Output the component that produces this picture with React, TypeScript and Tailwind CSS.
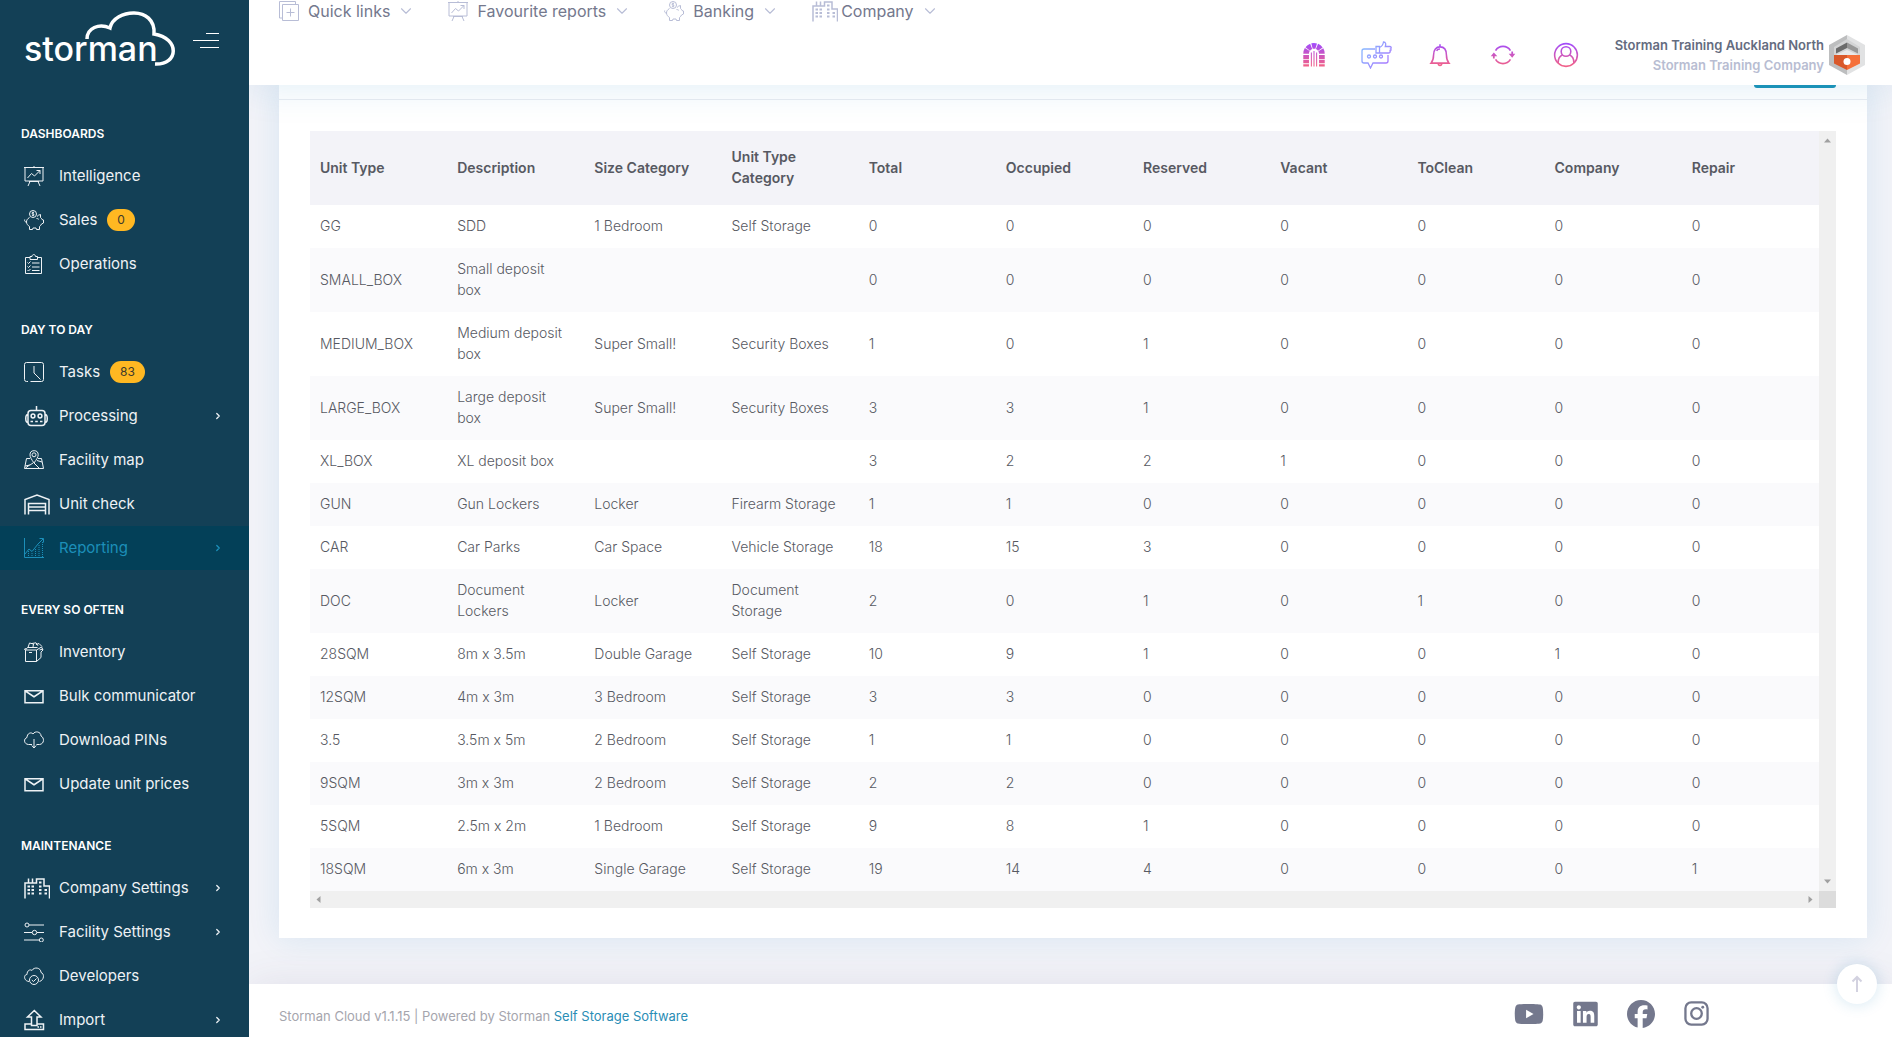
import React from 'react';
import { LiaEnvelope } from 'react-icons/lia';
import { FaYoutube, FaLinkedin, FaFacebook } from 'react-icons/fa6';
import { ChevronDown, ChevronRight } from 'lucide-react';

type IconProps = { className?: string };

// Thin 20x20 line icon shell
function Line({ className = '', children }: { className?: string; children: React.ReactNode }) {
    return (
        <svg viewBox="0 0 20 20" fill="none" stroke="currentColor" strokeWidth="1" className={`w-5 h-5 flex-shrink-0 ${className}`} aria-hidden="true">
            {children}
        </svg>
    );
}

const BoardIcon = ({ className }: IconProps) => (
    <Line className={className}>
        <path d="M0 1.5h20M10 0v1.5M1 1.5v13.5h18V1.5M6 15.5l-2 4.5M14 15.5l2 4.5M5 15.5h10" />
        <path d="M3.5 12l4-4.5 3 2.5L16 4.5M12.5 4.5H16V8" />
    </Line>
);

const PiggyIcon = ({ className }: IconProps) => (
    <Line className={className}>
        <circle cx="9" cy="4" r="3.5" />
        <path d="M10 2.7c-1-.7-2.2-.2-2 .6.2.9 2 .5 2 1.5 0 .9-1.3 1-2.1.4M9 1.8v4.4" />
        <path d="M5.500 7.500C3 9 2.500 10.500 2.500 12c0 2 1.500 3.500 3 4.500V19.500h3l.5-1.500h3l.5 1.500h3v-3c1-.7 1.700-1.600 2-2.500l2-1v-3L18 9.500c-.3-1-.8-1.500-1.500-2V4.500c-1.500.2-2.700 1-3.500 2M2.500 12C1 12 .3 11 .7 9.500M12.500 8.500c.8 0 1.700.3 2.300.8" />
    </Line>
);

const ClipboardIcon = ({ className }: IconProps) => (
    <Line className={className}>
        <path d="M6 3.500H1.500v16h16v-16H13M6 5.500v-3h2c0-2.600 3.500-2.600 3.500 0H13.500v3z" />
        <path d="M3.500 8.500l1 1 2-2M3.500 12.500l1 1 2-2M3.500 16l1 1 2-2M8 9h7.500M8 13h7.500M8 16.500h7.500" />
    </Line>
);

const ClockIcon = ({ className }: IconProps) => (
    <Line className={className}>
        <path d="M4 19.500H2.500a2 2 0 0 1-2-2v-15a2 2 0 0 1 2-2h15a2 2 0 0 1 2 2v15a2 2 0 0 1-2 2H6.500M10 4v7l6.500 6.500" />
    </Line>
);

const MapIcon = ({ className }: IconProps) => (
    <Line className={className}>
        <path d="M10 13C7.500 9.500 6 7 6 4.800a4 4 0 0 1 8.200 0C14.200 7 12.500 9.500 10 13z" />
        <circle cx="10" cy="4.800" r="2" />
        <path d="M6 8.500H2.500L.5 18.500h19l-2-10h-3.500M1 16l5-1 3-2M10 13l5 5M13 10.500l5 1.500M1.500 18l4-3" />
    </Line>
);

const GrowthIcon = ({ className }: IconProps) => (
    <Line className={className}>
        <path d="M.5 0v19.500H20M1 16l4-5 3 2.500L14 6l5-5M15.500.5h4v4" />
        <path d="M4.500 13v6M8 15v4M11.500 11v8M15 7v12M18.500 4v15" strokeDasharray="1 1" />
    </Line>
);

const BoxIcon = ({ className }: IconProps) => (
    <Line className={className}>
        <path d="M1.500 8h11v11.500h-11zM12.500 8l5-3 1.500 3-2 2v5.500l-4.500 4M1.500 8l2-2.500h10M5 10.500h3M.5 8l1-2" />
        <path d="M4 5.500L5.500 1l4 1-.5 3M8 1.500l4-.7 2 3M12 2.500l3-1 3 3M15.500 8l3.500-1" />
    </Line>
);

const CloudDownIcon = ({ className }: IconProps) => (
    <Line className={className}>
        <path d="M8 14.500H4.500C-.5 14-.5 8.500 3 7.500 3 3.500 7 1.500 9 4c2-3.500 8-2.500 8 2 3.500 1.500 3.500 8-1.500 8.500H12.500M10 9v9M7.800 15.500L10 18l2.200-2.500" />
    </Line>
);

const CloudCheckIcon = ({ className }: IconProps) => (
    <Line className={className}>
        <path d="M5 15.500C-.5 15-.5 8.500 3 8.500 3 4.500 6 3 8 4.500c2-4 9-3 9 2 3.500 1 3.500 7.500-1.500 9" />
        <circle cx="10" cy="14" r="4.500" />
        <path d="M7.800 14l1.700 1.500 3-3" />
    </Line>
);

const SlidersIcon = ({ className }: IconProps) => (
    <Line className={className}>
        <path d="M5 3h15M0 10.500h8M13 10.500h7M0 18h15" />
        <circle cx="3" cy="3" r="2" />
        <circle cx="10.500" cy="10.500" r="2.200" />
        <circle cx="17.300" cy="18" r="2" />
    </Line>
);

const PagesIcon = ({ className }: IconProps) => (
    <Line className={className}>
        <path d="M3.500 3.500h16v16h-16zM3.500 17H.5V.5h16v3M11.500 7.500v8M7.500 11.500h8" />
    </Line>
);

// Heavier 26x22 icons
function Wide({ children }: { children: React.ReactNode }) {
    return (
        <svg viewBox="0 0 26 22" fill="none" stroke="currentColor" strokeWidth="1.500" className="w-[26px] h-[22px] flex-shrink-0" aria-hidden="true">
            {children}
        </svg>
    );
}

const RobotIcon = () => (
    <Wide>
        <path d="M12.500 1v4M7 5.500h11a3 3 0 0 1 3 3v9a3 3 0 0 1-3 3H7a3 3 0 0 1-3-3v-9a3 3 0 0 1 3-3zM4 9.500c-3 0-3 8 0 8M21 9.500c3 0 3 8 0 8" />
        <circle cx="9" cy="11" r="1.900" />
        <circle cx="16" cy="11" r="1.900" />
        <path d="M6.500 16.500H9M11.200 16.500h2.600M16 16.500h2.500" />
    </Wide>
);

const WarehouseIcon = () => (
    <Wide>
        <path d="M1 21.500V6.500L13 2l12 4.500v15M4.500 21.500v-11h17v11M4.500 14h17M4.500 17.500h17" />
    </Wide>
);

const CityIcon = () => (
    <Wide>
        <path d="M1 21.500V6h11.500V2h7.500v7h5.500v12.500M4.500 6V1.500M8.500 6V1.500M12.500 6V1.500" />
        <path d="M3.500 9.500h2.500M7.500 9.500H10M3.500 13h2.500M7.500 13H10M3.500 16.500h2.500M7.500 16.500H10M15 5.500h2.500M15 9.500h2.500M15 13h2.500M15 16.500h2.500M20.500 13h2.500M20.500 16.500h2.500" strokeWidth="2.200" />
    </Wide>
);

const UploadIcon = () => (
    <Wide>
        <path d="M7.500 15H1v5.500h18.500V15H13M7.500 16.500V8H3.500L10.300 1.500 17 8h-4v8.500zM13.500 18H15M16 18h1.500" />
    </Wide>
);

const MailIcon = () => <LiaEnvelope className="w-6 h-6 -ml-[2px] flex-shrink-0" />;

const InstagramIcon = () => (
    <svg viewBox="0 0 26 26" className="w-[25px] h-[25px]" fill="none" stroke="currentColor" strokeWidth="2.400">
        <rect x="1.500" y="1.500" width="23" height="23" rx="6" />
        <circle cx="13" cy="13" r="5.500" />
        <circle cx="19.500" cy="6.500" r="1.500" fill="currentColor" stroke="none" />
    </svg>
);

type NavItem = {
    name: string;
    icon: React.ComponentType<IconProps>;
    badge?: string;
    more?: boolean;
    active?: boolean;
};

const sections: { title: string; items: NavItem[] }[] = [
    {
        title: 'Dashboards',
        items: [
            { name: 'Intelligence', icon: BoardIcon },
            { name: 'Sales', icon: PiggyIcon, badge: '0' },
            { name: 'Operations', icon: ClipboardIcon },
        ],
    },
    {
        title: 'Day to day',
        items: [
            { name: 'Tasks', icon: ClockIcon, badge: '83' },
            { name: 'Processing', icon: RobotIcon, more: true },
            { name: 'Facility map', icon: MapIcon },
            { name: 'Unit check', icon: WarehouseIcon },
            { name: 'Reporting', icon: GrowthIcon, more: true, active: true },
        ],
    },
    {
        title: 'Every so often',
        items: [
            { name: 'Inventory', icon: BoxIcon },
            { name: 'Bulk communicator', icon: MailIcon },
            { name: 'Download PINs', icon: CloudDownIcon },
            { name: 'Update unit prices', icon: MailIcon },
        ],
    },
    {
        title: 'Maintenance',
        items: [
            { name: 'Company Settings', icon: CityIcon, more: true },
            { name: 'Facility Settings', icon: SlidersIcon, more: true },
            { name: 'Developers', icon: CloudCheckIcon },
            { name: 'Import', icon: UploadIcon, more: true },
        ],
    },
];

const topLinks: { name: string; icon: React.ComponentType<IconProps> }[] = [
    { name: 'Quick links', icon: PagesIcon },
    { name: 'Favourite reports', icon: BoardIcon },
    { name: 'Banking', icon: PiggyIcon },
    { name: 'Company', icon: CityIcon },
];

const columns = [
    'Unit Type', 'Description', 'Size Category', 'Unit Type Category', 'Total',
    'Occupied', 'Reserved', 'Vacant', 'ToClean', 'Company', 'Repair',
];

const rows = [
    ['GG', 'SDD', '1 Bedroom', 'Self Storage', 0, 0, 0, 0, 0, 0, 0],
    ['SMALL_BOX', 'Small deposit box', '', '', 0, 0, 0, 0, 0, 0, 0],
    ['MEDIUM_BOX', 'Medium deposit box', 'Super Small!', 'Security Boxes', 1, 0, 1, 0, 0, 0, 0],
    ['LARGE_BOX', 'Large deposit box', 'Super Small!', 'Security Boxes', 3, 3, 1, 0, 0, 0, 0],
    ['XL_BOX', 'XL deposit box', '', '', 3, 2, 2, 1, 0, 0, 0],
    ['GUN', 'Gun Lockers', 'Locker', 'Firearm Storage', 1, 1, 0, 0, 0, 0, 0],
    ['CAR', 'Car Parks', 'Car Space', 'Vehicle Storage', 18, 15, 3, 0, 0, 0, 0],
    ['DOC', 'Document Lockers', 'Locker', 'Document Storage', 2, 0, 1, 0, 1, 0, 0],
    ['28SQM', '8m x 3.5m', 'Double Garage', 'Self Storage', 10, 9, 1, 0, 0, 1, 0],
    ['12SQM', '4m x 3m', '3 Bedroom', 'Self Storage', 3, 3, 0, 0, 0, 0, 0],
    ['3.5', '3.5m x 5m', '2 Bedroom', 'Self Storage', 1, 1, 0, 0, 0, 0, 0],
    ['9SQM', '3m x 3m', '2 Bedroom', 'Self Storage', 2, 2, 0, 0, 0, 0, 0],
    ['5SQM', '2.5m x 2m', '1 Bedroom', 'Self Storage', 9, 8, 1, 0, 0, 0, 0],
    ['18SQM', '6m x 3m', 'Single Garage', 'Self Storage', 19, 14, 4, 0, 0, 0, 1],
];

function Logo() {
    return (
        <svg viewBox="0 0 154 60" className="w-[154px] h-[60px]" role="img" aria-label="Storman">
            <text x="0" y="51" fill="#fff" fontFamily="Inter, sans-serif" fontSize="34" fontWeight="500">storman</text>
            <path
                d="M63 29C63 18 75 13 86 18C90 -1 132 -5 130 24C156 28 155 55 131 54"
                fill="none" stroke="#fff" strokeWidth="3.500"
            />
        </svg>
    );
}

function Sidebar() {
    return (
        <aside className="relative z-20 w-[249px] flex-shrink-0 bg-[#134056] text-[#eef2f5]">
            <div className="flex items-start justify-between pl-6 pr-[30px] pt-[10px] h-[94px]">
                <Logo />
                <button aria-label="Toggle menu" className="flex flex-col items-end gap-[6px] w-[26px] pt-[23px]">
                    <span className="w-[13px] h-px bg-white" />
                    <span className="w-[26px] h-px bg-white" />
                    <span className="w-[19px] h-px bg-white" />
                </button>
            </div>
            <nav>
                {sections.map(section => (
                    <div key={section.title} className="first:pb-1">
                        <h4 className="pl-[21px] pt-[30px] pb-[10px] text-xs leading-5 font-semibold uppercase text-white">
                            {section.title}
                        </h4>
                        {section.items.map(item => (
                            <a
                                key={item.name}
                                href="#"
                                className={`flex items-center h-11 pl-6 pr-[26px] text-[15px] ${item.active ? 'bg-[#034058] text-[#1c8fb9]' : ''}`}
                            >
                                <span className="w-[35px] flex-shrink-0"><item.icon /></span>
                                <span>{item.name}</span>
                                {item.badge && (
                                    <span className="ml-[10px] px-[10px] h-[22px] leading-[22px] rounded-full bg-[#ffb822] text-[#3d3a2c] text-xs">
                                        {item.badge}
                                    </span>
                                )}
                                {item.more && <ChevronRight size={10} strokeWidth={3} className="ml-auto" />}
                            </a>
                        ))}
                    </div>
                ))}
            </nav>
        </aside>
    );
}

const iconButton = 'w-[31px] flex justify-center';

function Header() {
    return (
        <header className="relative z-10 h-[85px] bg-white shadow-[0_0_40px_rgba(28,130,185,0.15)]">
            <div className="flex items-center gap-[33px] h-[21px] pl-[30px] text-base text-[#74788d]">
                {topLinks.map(link => (
                    <button key={link.name} className="flex items-center">
                        <span className="w-[29px] text-[#b8bdd6]"><link.icon /></span>
                        {link.name}
                        <ChevronDown size={18} strokeWidth={1.500} className="ml-[7px] text-[#b8bdd6]" />
                    </button>
                ))}
            </div>
            <div className="flex items-center justify-end h-[68px] pr-[27px]">
                <svg width="0" height="0" aria-hidden="true">
                    <defs>
                        <linearGradient id="pink" gradientUnits="userSpaceOnUse" x1="0" y1="2" x2="0" y2="28">
                            <stop offset="0" stopColor="#a04bff" />
                            <stop offset="1" stopColor="#f0608a" />
                        </linearGradient>
                        <linearGradient id="blue" gradientUnits="userSpaceOnUse" x1="0" y1="0" x2="31" y2="28">
                            <stop offset="0" stopColor="#7fc4ff" />
                            <stop offset="1" stopColor="#b06bff" />
                        </linearGradient>
                    </defs>
                </svg>
                <div className="flex items-center gap-8 mr-7">
                    <button aria-label="Gate" className={iconButton}>
                        <svg viewBox="0 0 32 32" className="w-7 h-7" fill="none" stroke="url(#pink)">
                            <path d="M7 14.500a9 9 0 0 1 18 0" strokeWidth="6.500" strokeDasharray="4.900 0.950" />
                            <path d="M7 16v4.500M7 21.500v4M7 26.500v2.500M25 16v4.500M25 21.500v4M25 26.500v2.500" strokeWidth="6.500" />
                            <path d="M13 13v16M16 11.500v17.500M19 13v16" strokeWidth="1.200" />
                        </svg>
                    </button>
                    <button aria-label="Feedback" className={iconButton}>
                        <svg viewBox="0 0 31 28" className="w-[31px] h-7" fill="none" stroke="url(#blue)" strokeWidth="1.300">
                            <path d="M14 8H3a2 2 0 0 0-2 2v10a2 2 0 0 0 2 2h4l2.500 5 2.500-5h13a2 2 0 0 0 2-2v-6" />
                            <circle cx="8" cy="15.500" r="1.500" />
                            <circle cx="14" cy="15.500" r="1.500" />
                            <circle cx="20" cy="15.500" r="1.500" />
                            <path d="M15 5.500h3.500v6.500H15zM18.500 6.500c2.500-1 3.500-2.500 4-5.500 2.500 0 2.500 2 1.800 4.500h4.700c1.500 0 1.500 2 .5 2.500 1 .5.500 2-.5 2 .5 1.500-.5 2-1.500 2h-9" />
                        </svg>
                    </button>
                    <button aria-label="Notifications" className={iconButton}>
                        <svg viewBox="0 0 28 32" className="w-6 h-7" fill="none" stroke="url(#pink)" strokeWidth="1.800">
                            <path d="M14 3.500v2.500M3.500 25.500c2.500-3 3-5 3-9.500 0-6 3-9.500 7.500-9.500s7.500 3.500 7.500 9.500c0 4.500.5 6.500 3 9.500zM12 26c0 3 4 3 4 0M10 11c1-1.500 2.500-2 4-2" />
                        </svg>
                    </button>
                    <button aria-label="Refresh" className={iconButton}>
                        <svg viewBox="0 0 32 32" className="w-7 h-7" fill="none" stroke="url(#pink)" strokeWidth="2">
                            <path d="M7.500 11a10 10 0 0 1 17 0M24.500 21a10 10 0 0 1-17 0M5.500 20v-4M26.500 12v4" />
                            <path d="M2 17.500L5.500 13 9.500 17.500zM22.500 14.500l4 4.500 3.500-4.500z" fill="url(#pink)" stroke="none" />
                        </svg>
                    </button>
                    <button aria-label="Profile" className={iconButton}>
                        <svg viewBox="0 0 32 32" className="w-7 h-7" fill="none" stroke="url(#pink)" strokeWidth="1.800">
                            <circle cx="16" cy="16" r="13" />
                            <circle cx="16" cy="12" r="5.500" />
                            <path d="M7 25c0-5 2-8 5-9M25 25c0-5-2-8-5-9" />
                        </svg>
                    </button>
                </div>
                <div className="w-[215px] text-right text-[13px] leading-5 font-semibold mr-[5px]">
                    <p className="text-[#646c7f]">Storman Training Auckland North</p>
                    <p className="text-[#b8bdd2]">Storman Training Company</p>
                </div>
                <svg viewBox="0 0 36 40" className="w-9 h-10" role="img" aria-label="Company logo">
                    <path d="M18 0l18 10v20L18 40z" fill="#e1e2e3" />
                    <path d="M18 0L0 10v20l18 10z" fill="#bdbebf" />
                    <path d="M18 4L5 12v8h26v-8z" fill="#d3d4d5" />
                    <path d="M18 7.500L7 13.500v5l11-5.500z" fill="#6b6b6b" />
                    <path d="M18 7.500l11 6v5L18 13z" fill="#979797" />
                    <path d="M18 20H5v8.500L18 35z" fill="#d9582a" />
                    <path d="M18 20h13v8.500L18 35z" fill="#f5703a" />
                    <path d="M7 20l11-5 11 5z" fill="#e9e9ea" />
                    <circle cx="18" cy="26.500" r="3.500" fill="#fff" />
                </svg>
            </div>
        </header>
    );
}

const arrow = 'w-[7px] h-[7px]';

function UnitTable() {
    return (
        <div className="mx-[31px] mt-[31px] grid grid-cols-[1fr_17px]">
            <table className="w-full table-fixed text-left text-[14px] leading-[21px] text-[#575962]">
                <thead className="bg-[#f3f3f8]">
                    <tr>
                        {columns.map(col => (
                            <th key={col} className="pl-[10px] pr-4 pt-[15px] pb-[17px] font-semibold">{col}</th>
                        ))}
                    </tr>
                </thead>
                <tbody>
                    {rows.map((row, i) => (
                        <tr key={i} className="even:bg-[#fafafc]">
                            {row.map((cell, j) => (
                                <td key={j} className="pl-[10px] pr-4 pt-[10px] pb-3 font-light">{cell}</td>
                            ))}
                        </tr>
                    ))}
                </tbody>
            </table>
            {/* Vertical scroll track */}
            <div className="flex flex-col items-center justify-between py-[6px] bg-[#f0f0f0] text-[#a0a0a0]">
                <svg viewBox="0 0 7 7" className={arrow}><path d="M0 5.500L3.500 1.500 7 5.500z" fill="currentColor" /></svg>
                <svg viewBox="0 0 7 7" className={arrow}><path d="M0 1.500L3.500 5.500 7 1.500z" fill="currentColor" /></svg>
            </div>
            {/* Horizontal scroll track */}
            <div className="flex items-center justify-between h-[17px] px-[5px] bg-[#f0f0f0] text-[#a0a0a0]">
                <svg viewBox="0 0 7 7" className={arrow}><path d="M5.500 0L1.500 3.500 5.500 7z" fill="currentColor" /></svg>
                <svg viewBox="0 0 7 7" className={arrow}><path d="M1.500 0L5.500 3.500 1.500 7z" fill="currentColor" /></svg>
            </div>
            <div className="bg-[#dcdcdc]" />
        </div>
    );
}

export default function App() {
    return (
        <div className="flex h-screen overflow-hidden bg-[#f2f3f8] font-['Inter',sans-serif]">
            <Sidebar />
            <div className="flex-1 min-w-0 flex flex-col">
                <Header />
                <main className="pl-[30px] pr-[25px] pb-[46px]">
                    <section className="bg-white pb-[30px] shadow-[0_0_30px_rgba(28,130,200,0.12)]">
                        <div className="flex items-start justify-end h-[15px] px-[31px] border-b border-[#ebedf2]">
                            <button aria-label="Export" className="w-[82px] h-[3px] rounded-b bg-[#1c94b8]" />
                        </div>
                        <UnitTable />
                    </section>
                </main>
                <footer className="flex-1 flex items-start justify-between bg-white pl-[30px] pr-[183px] shadow-[0_0_40px_rgba(82,63,105,0.1)]">
                    <p className="pt-5 text-[13px] leading-6 text-[#a5a5ad]">
                        Storman Cloud v1.1.15 | Powered by Storman <a href="#" className="text-[#2a8db5]">Self Storage Software</a>
                    </p>
                    <div className="flex items-center gap-[29px] h-[59px] text-[#74788d]">
                        <a href="#" aria-label="YouTube"><FaYoutube className="w-[30px] h-[30px]" /></a>
                        <a href="#" aria-label="LinkedIn"><FaLinkedin className="w-[25px] h-7" /></a>
                        <a href="#" aria-label="Facebook"><FaFacebook className="w-7 h-7" /></a>
                        <a href="#" aria-label="Instagram"><InstagramIcon /></a>
                    </div>
                </footer>
            </div>
            <button aria-label="Scroll to top" className="fixed right-[15px] bottom-[33px] z-20 w-10 h-10 flex items-center justify-center rounded-full bg-white text-[#d3d2e0] shadow-[0_0_15px_rgba(28,130,185,0.2)]">
                <svg viewBox="0 0 12 18" className="w-3 h-[18px]" fill="none" stroke="currentColor" strokeWidth="2">
                    <path d="M6 17V2M1.500 6.500L6 2l4.500 4.500" />
                </svg>
            </button>
        </div>
    );
}
